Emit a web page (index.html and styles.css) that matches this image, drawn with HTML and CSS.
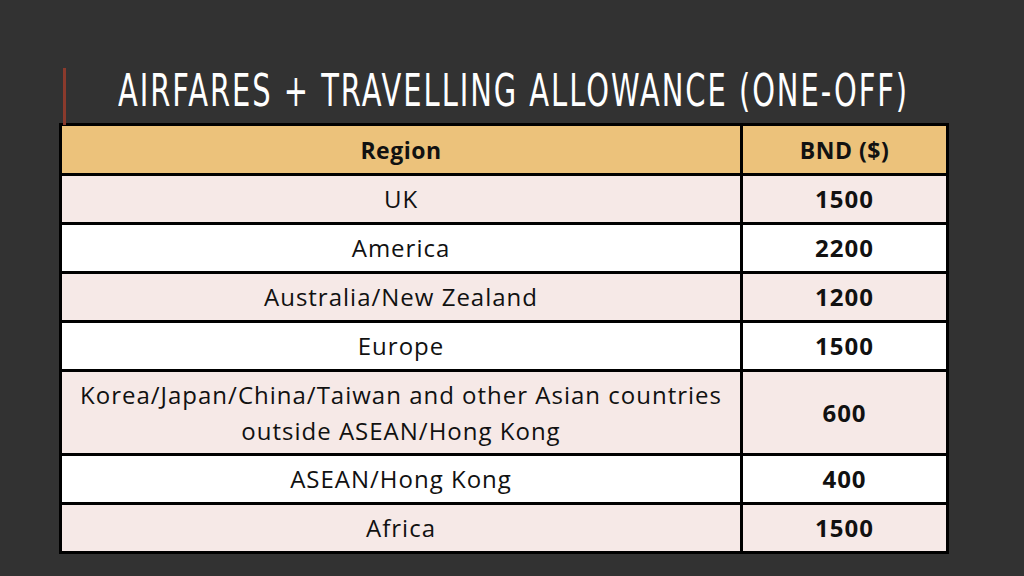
FILE: index.html
```html
<!DOCTYPE html>
<html>
<head>
<meta charset="utf-8">
<link rel="stylesheet" href="styles.css">
</head>
<body>
<div class="slide">
  <div class="accent"></div>
  <h1 class="title"><span class="title-text">AIRFARES + TRAVELLING ALLOWANCE (ONE-OFF)</span></h1>
  <table class="fares">
    <thead>
      <tr><th class="c-region">Region</th><th class="c-amt">BND ($)</th></tr>
    </thead>
    <tbody>
      <tr class="pink"><td>UK</td><td class="amt">1500</td></tr>
      <tr><td>America</td><td class="amt">2200</td></tr>
      <tr class="pink"><td>Australia/New Zealand</td><td class="amt">1200</td></tr>
      <tr><td>Europe</td><td class="amt">1500</td></tr>
      <tr class="pink tall"><td>Korea/Japan/China/Taiwan and other Asian countries<br>outside ASEAN/Hong Kong</td><td class="amt">600</td></tr>
      <tr><td>ASEAN/Hong Kong</td><td class="amt">400</td></tr>
      <tr class="pink"><td>Africa</td><td class="amt">1500</td></tr>
    </tbody>
  </table>
</div>
</body>
</html>
```
FILE: styles.css
```css
html, body { margin: 0; padding: 0; }
body { background: #323232; width: 1024px; height: 576px; overflow: hidden; }
.slide { position: relative; width: 1024px; height: 576px; }
.accent { position: absolute; left: 63px; top: 68px; width: 3px; height: 57px; background: #8a3a2c; }
.title {
  margin: 0;
  padding: 66px 0 0 118px;
  height: 57px;
  box-sizing: content-box;
  overflow: hidden;
  font-family: "DejaVu Sans", sans-serif;
  font-weight: 400;
  font-size: 45px;
  line-height: 50px;
  letter-spacing: 3px;
  color: #ffffff;
  white-space: nowrap;
}
.title-text { display: inline-block; transform: scaleX(0.644); transform-origin: 0 50%; }
.fares {
  margin-left: 59px;
  width: 890px;
  border-collapse: collapse;
  font-family: "Open Sans", "Liberation Sans", sans-serif;
  font-size: 24px;
  letter-spacing: 1px;
  color: #111;
}
.fares th, .fares td {
  border: 3px solid #000;
  text-align: center;
  padding: 0;
  height: 46px;
  line-height: 30px;
}
.fares th { background: #ecc27b; font-weight: 700; font-size: 23px; letter-spacing: 0.5px; height: 47px; }
.c-region { width: 678px; }
.fares td { background: #ffffff; }
.fares tr.pink td { background: #f6e9e7; }
.fares tr.tall td { height: 81px; line-height: 36px; }
.fares td.amt { font-weight: 700; letter-spacing: 1px; }
```
